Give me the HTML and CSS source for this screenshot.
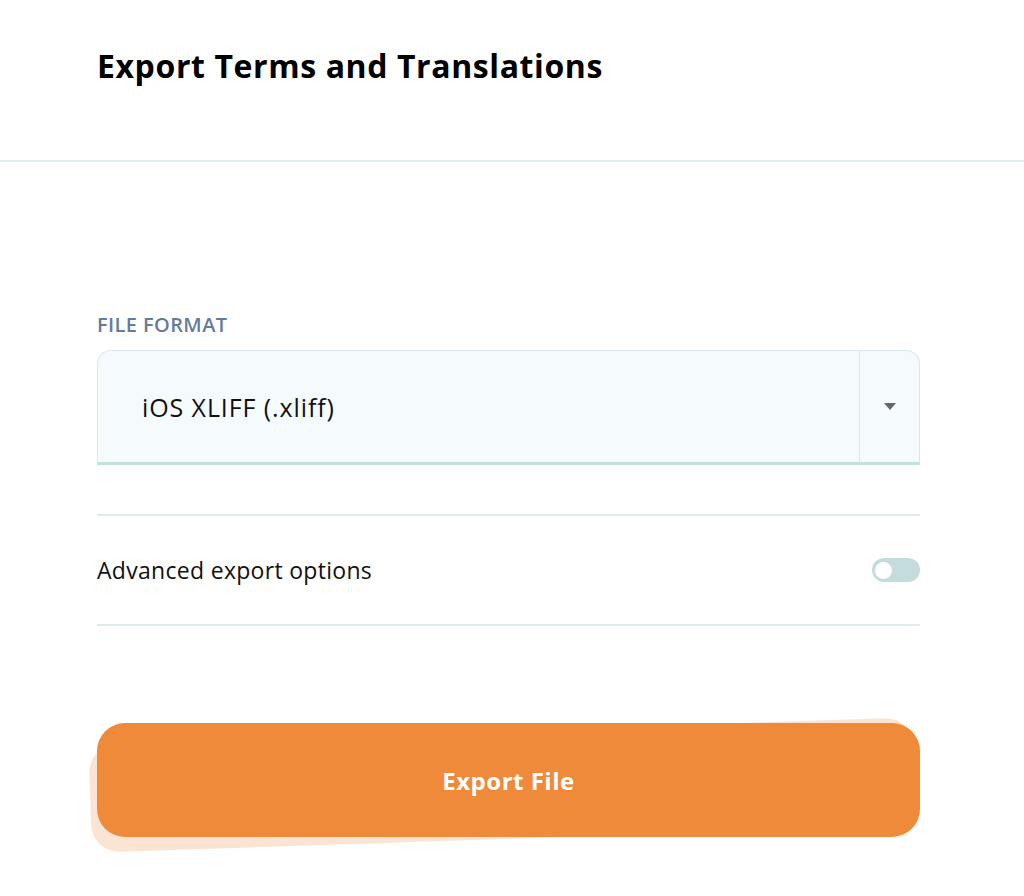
FILE: index.html
```html
<!DOCTYPE html>
<html lang="en">
<head>
<meta charset="utf-8">
<title>Export Terms and Translations</title>
<link rel="stylesheet" href="styles.css">
</head>
<body>
<header class="header">
  <h1 class="title">Export Terms and Translations</h1>
</header>
<main class="content">
  <div class="field">
    <label class="label">FILE FORMAT</label>
    <div class="select">
      <div class="select-value">iOS XLIFF (.xliff)</div>
      <div class="select-arrow"><span class="caret"></span></div>
    </div>
  </div>
  <div class="option-row">
    <span class="option-text">Advanced export options</span>
    <span class="toggle"><span class="knob"></span></span>
  </div>
  <div class="actions">
    <button class="export-btn" type="button">Export File</button>
  </div>
</main>
</body>
</html>
```

FILE: styles.css
```css
* { box-sizing: border-box; }
html, body { margin: 0; padding: 0; background: #fff; }
body {
  font-family: "Open Sans", "Noto Sans", sans-serif;
  color: #111;
  width: 1024px;
}
.header {
  height: 162px;
  padding: 42px 0 0 97px;
  border-bottom: 2px solid #e2edf1;
}
.title {
  margin: 0;
  font-size: 32px;
  font-weight: 700;
  line-height: 48px;
  letter-spacing: 0.6px;
  color: #000;
}
.content {
  padding: 149px 104px 0 97px;
}
.field { display: flex; flex-direction: column; }
.label {
  font-size: 20px;
  font-weight: 600;
  color: #667b9b;
  line-height: 28px;
  margin-bottom: 11px;
  letter-spacing: 0.4px;
}
.select {
  display: flex;
  height: 115px;
  background: #f5fbfd;
  border: 1px solid #d9e7ed;
  border-bottom: 3px solid #bfe3d6;
  border-radius: 14px 14px 0 0;
}
.select-value {
  flex: 1;
  display: flex;
  align-items: center;
  padding-left: 44px;
  font-size: 25px;
  color: #111;
  letter-spacing: 0.9px;
}
.select-arrow {
  width: 60px;
  border-left: 1px solid #d9e7ed;
  display: flex;
  align-items: center;
  justify-content: center;
}
.caret {
  width: 0; height: 0;
  border-left: 6px solid transparent;
  border-right: 6px solid transparent;
  border-top: 7px solid #666;
}
.option-row {
  margin-top: 49px;
  height: 112px;
  border-top: 2px solid #e0ebf0;
  border-bottom: 2px solid #e0ebf0;
  display: flex;
  align-items: center;
  justify-content: space-between;
}
.option-text {
  font-size: 23px;
  letter-spacing: 0.3px;
  color: #111;
}
.toggle {
  width: 48px;
  height: 24px;
  border-radius: 12px;
  background: #c4dcdc;
  display: flex;
  align-items: center;
  padding-left: 3px;
}
.knob {
  width: 17px; height: 17px;
  border-radius: 50%;
  background: #fff;
}
.actions {
  position: relative;
  isolation: isolate;
  margin-top: 97px;
  padding-bottom: 30px;
}
.actions::before {
  content: "";
  position: absolute;
  left: -7px; right: 5px; top: 8px; height: 108px;
  border-radius: 28px;
  background: #fbe4d4;
  transform: rotate(-1.9deg);
  z-index: -1;
}
.export-btn {
  display: block;
  width: 100%;
  height: 114px;
  border: 0;
  border-radius: 28px;
  background: #ee8a3a;
  color: #fff;
  font-family: "Open Sans", "Noto Sans", sans-serif;
  font-size: 24px;
  font-weight: 700;
  letter-spacing: 0.5px;
  cursor: pointer;
}
```
